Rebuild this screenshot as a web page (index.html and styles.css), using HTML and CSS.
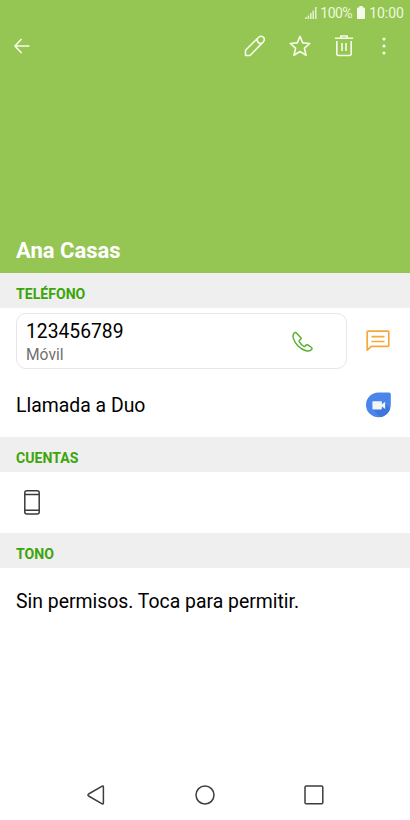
FILE: index.html
```html
<!DOCTYPE html>
<html lang="es">
<head>
  <meta charset="UTF-8" />
  <meta name="viewport" content="width=device-width, initial-scale=1.0"/>
  <title>Ana Casas</title>
  <link rel="stylesheet" href="styles.css">
</head>
<body>
  <header class="hero">
    <div class="status-bar">
      <svg class="signal" width="12" height="12" viewBox="0 0 12 12">
        <path d="M1 12v-2M3.400 12V8.500M5.800 12V6M8.200 12V3.500M10.800 12V0"/>
      </svg>
      <span class="percent">100%</span>
      <svg class="battery" width="8" height="13" viewBox="0 0 8 13">
        <path d="M2.300 0h3.400v1.500H7q1 0 1 1V12q0 1-1 1H1q-1 0-1-1V2.500q0-1 1-1h1.300z"/>
      </svg>
      <span class="time">10:00</span>
    </div>

    <nav class="toolbar">
      <button type="button" class="back" aria-label="Atrás">
        <svg width="16" height="16" viewBox="0 0 16 16"><path d="M7.600 1L.9 8l6.700 7M1 8h14.500"/></svg>
      </button>
      <button type="button" aria-label="Editar">
        <svg width="22" height="22" viewBox="0 0 22 22"><path d="M1.500 20.500v-5.300L14.700 2.200a3.100 3.100 0 0 1 4.600 0 3.200 3.200 0 0 1 0 4.700L6 20.500zM13.300 3.600c-.7 3 1.500 5.600 4.700 4.600"/></svg>
      </button>
      <button type="button" aria-label="Favorito">
        <svg width="22" height="22" viewBox="0 0 22 22"><path d="M11 1.400l2.700 6.500 7.100.6-5.400 4.700 1.700 7L11 16.500l-6.100 3.700 1.700-7L1.200 8.500l7.100-.6z"/></svg>
      </button>
      <button type="button" aria-label="Eliminar">
        <svg width="20" height="22" viewBox="0 0 20 22"><path d="M1 3.200h18M6.800 3V1h6.400v2M2.800 6v12.500q0 2 2 2h10.400q2 0 2-2V6M8 8v8M12 8v8"/></svg>
      </button>
      <button type="button" class="more" aria-label="Más">
        <svg width="4" height="20" viewBox="0 0 4 20"><circle cx="2" cy="3" r="1.600"/><circle cx="2" cy="10" r="1.600"/><circle cx="2" cy="17" r="1.600"/></svg>
      </button>
    </nav>

    <h1>Ana Casas</h1>
  </header>

  <main>
    <h2>TELÉFONO</h2>
    <div class="phone-row">
      <div class="phone-card">
        <div>
          <p class="number">123456789</p>
          <p class="type">Móvil</p>
        </div>
        <svg class="call" width="21" height="21" viewBox="0 0 22 22">
          <path d="M2.600 1.900C1.100 3.200.700 5 1.300 7.200c1.900 6.400 7.200 11.900 13.400 13.500 2.400.6 4.700.1 6-1.600.5-.7.300-1.400-.4-1.800l-3.700-2.700c-.7-.4-1.300-.4-1.900.2l-1.100 1.100c-.5.500-1 .5-1.600.1-1.700-1.300-3.100-2.800-4.300-4.700-.4-.7-.3-1.200.2-1.600l1-.9c.7-.6.8-1.100.4-1.800L4.600 2.200c-.5-.8-1.300-.9-2-.3z"/>
        </svg>
      </div>
      <svg class="message" width="24" height="22" viewBox="0 0 24 22">
        <path d="M1.200 20.200V2q0-.8.8-.8h20q.8 0 .8.800v13.500q0 .8-.8.800H5.200zM5.500 6.700h13M5.500 11.500h13"/>
      </svg>
    </div>
    <div class="duo-row">
      <p>Llamada a Duo</p>
      <svg width="25" height="26" viewBox="0 0 25 26">
        <path fill="#4a85ec" d="M12.500.5H23q1.800 0 1.800 1.800V13a12.400 12.400 0 1 1-12.300-12.500z"/>
        <path fill="#3f76dc" d="M18.500 10.500l5.500 6.300a12.400 12.400 0 0 1-9.500 8.400L7 17.300z"/>
        <path fill="#f2f4f8" d="M7.200 9.200h7.900q.8 0 .8.800v2.200l3.300-2.400v7.200l-3.300-2.500v2.100q0 .8-.8.800H7.200q-.8 0-.8-.8V10q0-.8.800-.8z"/>
      </svg>
    </div>

    <h2>CUENTAS</h2>
    <div class="account-row">
      <svg width="16" height="25" viewBox="0 0 16 25">
        <rect x=".8" y=".8" width="14.400" height="23.200" rx="2"/>
        <path d="M1 4.500h14M1 20.200h14"/>
      </svg>
    </div>

    <h2>TONO</h2>
    <p class="ringtone">Sin permisos. Toca para permitir.</p>
  </main>

  <footer class="nav-bar">
    <svg width="20" height="20" viewBox="0 0 20 20"><path d="M16.200 1.200L2.600 9q-1.400 1 0 2l13.600 7.800q1.200.4 1.200-.8V2q0-1.200-1.200-.8z"/></svg>
    <svg width="20" height="20" viewBox="0 0 20 20"><circle cx="10" cy="10" r="9"/></svg>
    <svg width="20" height="20" viewBox="0 0 20 20"><rect x="1" y="1" width="17.800" height="17.800" rx="1.300"/></svg>
  </footer>
</body>
</html>
```
FILE: styles.css
```css
* {
  box-sizing: border-box;
  margin: 0;
  padding: 0;
}

body {
  font-family: Roboto, sans-serif;
  font-size: 19.4px;
  color: #000;
  background: white;
  height: 100vh;
  display: flex;
  flex-direction: column;
}

svg {
  display: block;
  flex: none;
  fill: none;
  stroke-linejoin: round;
}

/* Green contact header */
.hero {
  height: 273px;
  background: #95c653;
  color: white;
  display: flex;
  flex-direction: column;
}

.status-bar {
  height: 24px;
  padding: 1px 6px 0 0;
  display: flex;
  justify-content: flex-end;
  align-items: center;
  color: #eef8df;
  font-size: 14px;
}

.signal {
  stroke: #e6f3d0;
  stroke-width: 1.5;
  margin-right: 3px;
}

.percent {
  letter-spacing: -0.5px;
}

.battery {
  fill: #f4fbe8;
  margin: 0 4px 0 5px;
}

.toolbar {
  height: 44px;
  padding: 0 24px 0 14px;
  display: flex;
  align-items: center;
  gap: 23px;
}

.toolbar button {
  background: none;
  border: none;
}

.toolbar svg {
  stroke: #f6fcea;
  stroke-width: 1.6;
}

.toolbar .back {
  margin-right: auto;
}

.toolbar .more {
  margin-left: 5px;
}

.toolbar .more svg {
  fill: #f6fcea;
  stroke: none;
}

h1 {
  margin-top: auto;
  padding: 0 16px 8px;
  font-size: 22px;
  font-weight: 700;
  line-height: 28px;
}

h2 {
  height: 35px;
  padding: 4px 16px 0;
  background: #efefef;
  color: #3ba50a;
  font-size: 14.1px;
  font-weight: 700;
  line-height: 35px;
}

/* Phone entries */
.phone-row {
  height: 65px;
  padding: 0 20px 0 16px;
  display: flex;
  justify-content: space-between;
  align-items: center;
}

.phone-card {
  width: 331px;
  height: 56px;
  padding: 4px 33px 0 9px;
  border: 1px solid #e6e6e6;
  border-radius: 10px;
  display: flex;
  justify-content: space-between;
  align-items: center;
}

.number {
  font-size: 19.3px;
  line-height: 24px;
}

.type {
  color: #707070;
  font-size: 15.6px;
  line-height: 22px;
}

.call {
  margin-bottom: 3px;
  stroke: #53af2b;
  stroke-width: 1.5;
}

.message {
  stroke: #f5a936;
  stroke-width: 1.7;
}

.duo-row {
  height: 64px;
  padding: 0 19px 0 16px;
  display: flex;
  justify-content: space-between;
  align-items: center;
}

.account-row {
  height: 61px;
  padding-left: 24px;
  display: flex;
  align-items: center;
}

.account-row svg {
  stroke: #3a3a3a;
  stroke-width: 1.5;
}

.ringtone {
  padding: 1px 16px 0;
  line-height: 66px;
}

/* System navigation */
.nav-bar {
  height: 51px;
  margin-top: auto;
  padding: 0 86px;
  display: flex;
  justify-content: space-between;
  align-items: center;
}

.nav-bar svg {
  stroke: #3d3d3d;
  stroke-width: 1.5;
}
```
